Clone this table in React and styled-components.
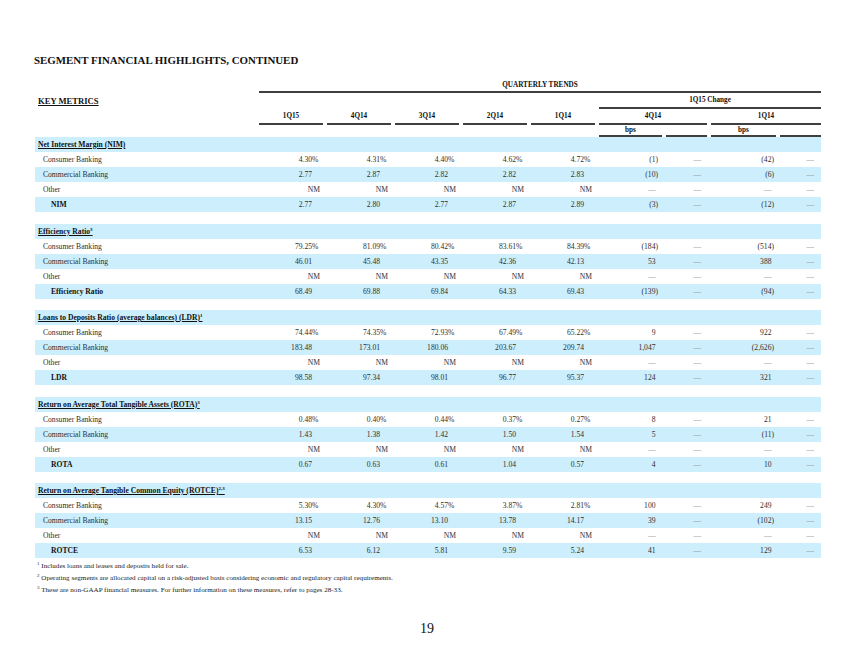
import styled, { createGlobalStyle } from "styled-components";

const shade = "#cdeefc";
const rule = "#3f3f3f";
const ink = "#2e2e2e";
const dashInk = "#8a8a8a";
const serif = `"Liberation Serif", "Times New Roman", serif`;
const columns = "222px repeat(5, 68px) 67px 45px 69px 43px";
const pads = [5, 5, 5, 5, 5, 6, 8, 4, 7];

const sections = [
  {
    title: "Net Interest Margin (NIM)",
    sup: null,
    total: "NIM",
    rows: [
      ["4.30%", "4.31%", "4.40%", "4.62%", "4.72%", "(1)", "(42)"],
      ["2.77", "2.87", "2.82", "2.82", "2.83", "(10)", "(6)"],
      ["2.77", "2.80", "2.77", "2.87", "2.89", "(3)", "(12)"],
    ],
  },
  {
    title: "Efficiency Ratio",
    sup: "3",
    total: "Efficiency Ratio",
    rows: [
      ["79.25%", "81.09%", "80.42%", "83.61%", "84.39%", "(184)", "(514)"],
      ["46.01", "45.48", "43.35", "42.36", "42.13", "53", "388"],
      ["68.49", "69.88", "69.84", "64.33", "69.43", "(139)", "(94)"],
    ],
  },
  {
    title: "Loans to Deposits Ratio (average balances) (LDR)",
    sup: "1",
    total: "LDR",
    rows: [
      ["74.44%", "74.35%", "72.93%", "67.49%", "65.22%", "9", "922"],
      ["183.48", "173.01", "180.06", "203.67", "209.74", "1,047", "(2,626)"],
      ["98.58", "97.34", "98.01", "96.77", "95.37", "124", "321"],
    ],
  },
  {
    title: "Return on Average Total Tangible Assets (ROTA)",
    sup: "3",
    total: "ROTA",
    rows: [
      ["0.48%", "0.40%", "0.44%", "0.37%", "0.27%", "8", "21"],
      ["1.43", "1.38", "1.42", "1.50", "1.54", "5", "(11)"],
      ["0.67", "0.63", "0.61", "1.04", "0.57", "4", "10"],
    ],
  },
  {
    title: "Return on Average Tangible Common Equity (ROTCE)",
    sup: "2,3",
    total: "ROTCE",
    rows: [
      ["5.30%", "4.30%", "4.57%", "3.87%", "2.81%", "100", "249"],
      ["13.15", "12.76", "13.10", "13.78", "14.17", "39", "(102)"],
      ["6.53", "6.12", "5.81", "9.59", "5.24", "41", "129"],
    ],
  },
];

const GlobalStyle = createGlobalStyle`
  html, body {
    margin: 0;
    padding: 0;
    background: #ffffff;
  }
  * {
    box-sizing: border-box;
  }
`;

const Page = styled.div`
  width: 854px;
  min-height: 660px;
  padding-top: 53px;
  font-family: ${serif};
  color: ${ink};
`;

const Title = styled.h1`
  margin: 0 0 11px 34px;
  font-size: 10.9px;
  line-height: 15px;
  font-weight: bold;
  color: #111;
`;

const Table = styled.div`
  margin-left: 35px;
  width: 786px;
`;

const HeadRow = styled.div`
  display: grid;
  grid-template-columns: ${columns};
  height: ${(p) => p.$h}px;
`;

const HeadCell = styled.div`
  grid-column: ${(p) => p.$col};
  display: flex;
  align-items: center;
  justify-content: center;
  margin: 0 ${(p) => (p.$flush ? 0 : 2)}px 0 2px;
  border-bottom: 2px solid ${rule};
  font-size: 7.2px;
  font-weight: bold;
  color: #111;
  white-space: nowrap;
`;

const KeyMetrics = styled.div`
  grid-column: 1;
  display: flex;
  align-items: center;
  padding-left: 3px;
  font-size: 8.6px;
  font-weight: bold;
  text-decoration: underline;
  color: #111;
`;

const Section = styled.div`
  & + & {
    margin-top: 11.5px;
  }
`;

const Row = styled.div`
  display: grid;
  grid-template-columns: ${columns};
  height: 15px;
  align-items: center;
  background: ${(p) => (p.$shaded ? shade : "transparent")};
  font-size: 7.6px;
`;

const Label = styled.div`
  padding-left: ${(p) => p.$indent}px;
  font-weight: ${(p) => (p.$strong ? "bold" : "normal")};
  text-decoration: ${(p) => (p.$underline ? "underline" : "none")};
  color: ${(p) => (p.$strong ? "#111" : ink)};
  white-space: nowrap;
`;

const Sup = styled.sup`
  font-size: 5px;
  line-height: 0;
  vertical-align: 3px;
`;

const Cell = styled.div`
  text-align: right;
  padding-right: ${(p) => p.$pad}px;
  white-space: nowrap;
  color: ${(p) => (p.$muted ? dashInk : ink)};
`;

const Suffix = styled.span`
  display: inline-block;
  width: ${(p) => p.$w}px;
  text-align: left;
`;

const Notes = styled.div`
  margin-top: 2px;
  padding-left: 37px;
  font-size: 7.1px;
  line-height: 12px;
  color: #222;
`;

const PageNumber = styled.div`
  margin-top: 26px;
  text-align: center;
  font-size: 14px;
  line-height: 14px;
  color: #111;
`;

function Quarter({ value, pad }) {
  if (value === "NM") return <Cell $pad={pad}>NM</Cell>;
  const pct = value.endsWith("%");
  return (
    <Cell $pad={pad}>
      {pct ? value.slice(0, -1) : value}
      <Suffix $w={8}>{pct ? "%" : ""}</Suffix>
    </Cell>
  );
}

function Bps({ value, pad }) {
  const paren = value.startsWith("(");
  return (
    <Cell $pad={pad} $muted={value === "—"}>
      {value}
      {!paren && <Suffix $w={2.5} />}
    </Cell>
  );
}

function DataRow({ label, indent, strong, shaded, values }) {
  const q = values ? values.slice(0, 5) : ["NM", "NM", "NM", "NM", "NM"];
  const c = values ? values.slice(5) : ["—", "—"];
  return (
    <Row $shaded={shaded}>
      <Label $indent={indent} $strong={strong}>
        {label}
      </Label>
      {q.map((v, i) => (
        <Quarter key={i} value={v} pad={pads[i]} />
      ))}
      <Bps value={c[0]} pad={pads[5]} />
      <Cell $pad={pads[6]} $muted>
        —
      </Cell>
      <Bps value={c[1]} pad={pads[7]} />
      <Cell $pad={pads[8]} $muted>
        —
      </Cell>
    </Row>
  );
}

function App() {
  return (
    <Page>
      <GlobalStyle />
      <Title>SEGMENT FINANCIAL HIGHLIGHTS, CONTINUED</Title>
      <Table>
        <HeadRow $h={14}>
          <HeadCell $col="2 / -1" $flush>
            QUARTERLY TRENDS
          </HeadCell>
        </HeadRow>
        <HeadRow $h={16}>
          <KeyMetrics>KEY METRICS</KeyMetrics>
          <HeadCell $col="7 / -1" $flush>
            1Q15 Change
          </HeadCell>
        </HeadRow>
        <HeadRow $h={16}>
          {["1Q15", "4Q14", "3Q14", "2Q14", "1Q14"].map((q, i) => (
            <HeadCell key={q} $col={`${i + 2}`}>
              {q}
            </HeadCell>
          ))}
          <HeadCell $col="7 / 9">4Q14</HeadCell>
          <HeadCell $col="9 / -1" $flush>
            1Q14
          </HeadCell>
        </HeadRow>
        <HeadRow $h={12}>
          <HeadCell $col="7">bps</HeadCell>
          <HeadCell $col="8" />
          <HeadCell $col="9">bps</HeadCell>
          <HeadCell $col="10" $flush />
        </HeadRow>

        {sections.map((s) => (
          <Section key={s.title}>
            <Row $shaded>
              <Label $indent={3} $strong $underline>
                {s.title}
                {s.sup && <Sup>{s.sup}</Sup>}
              </Label>
            </Row>
            <DataRow label="Consumer Banking" indent={8} values={s.rows[0]} />
            <DataRow label="Commercial Banking" indent={8} shaded values={s.rows[1]} />
            <DataRow label="Other" indent={8} />
            <DataRow label={s.total} indent={16} strong shaded values={s.rows[2]} />
          </Section>
        ))}
      </Table>
      <Notes>
        <div>
          <Sup>1</Sup> Includes loans and leases and deposits held for sale.
        </div>
        <div>
          <Sup>2</Sup> Operating segments are allocated capital on a risk-adjusted basis
          considering economic and regulatory capital requirements.
        </div>
        <div>
          <Sup>3</Sup> These are non-GAAP financial measures. For further information on
          these measures, refer to pages 28-33.
        </div>
      </Notes>
      <PageNumber>19</PageNumber>
    </Page>
  );
}

export default App;
